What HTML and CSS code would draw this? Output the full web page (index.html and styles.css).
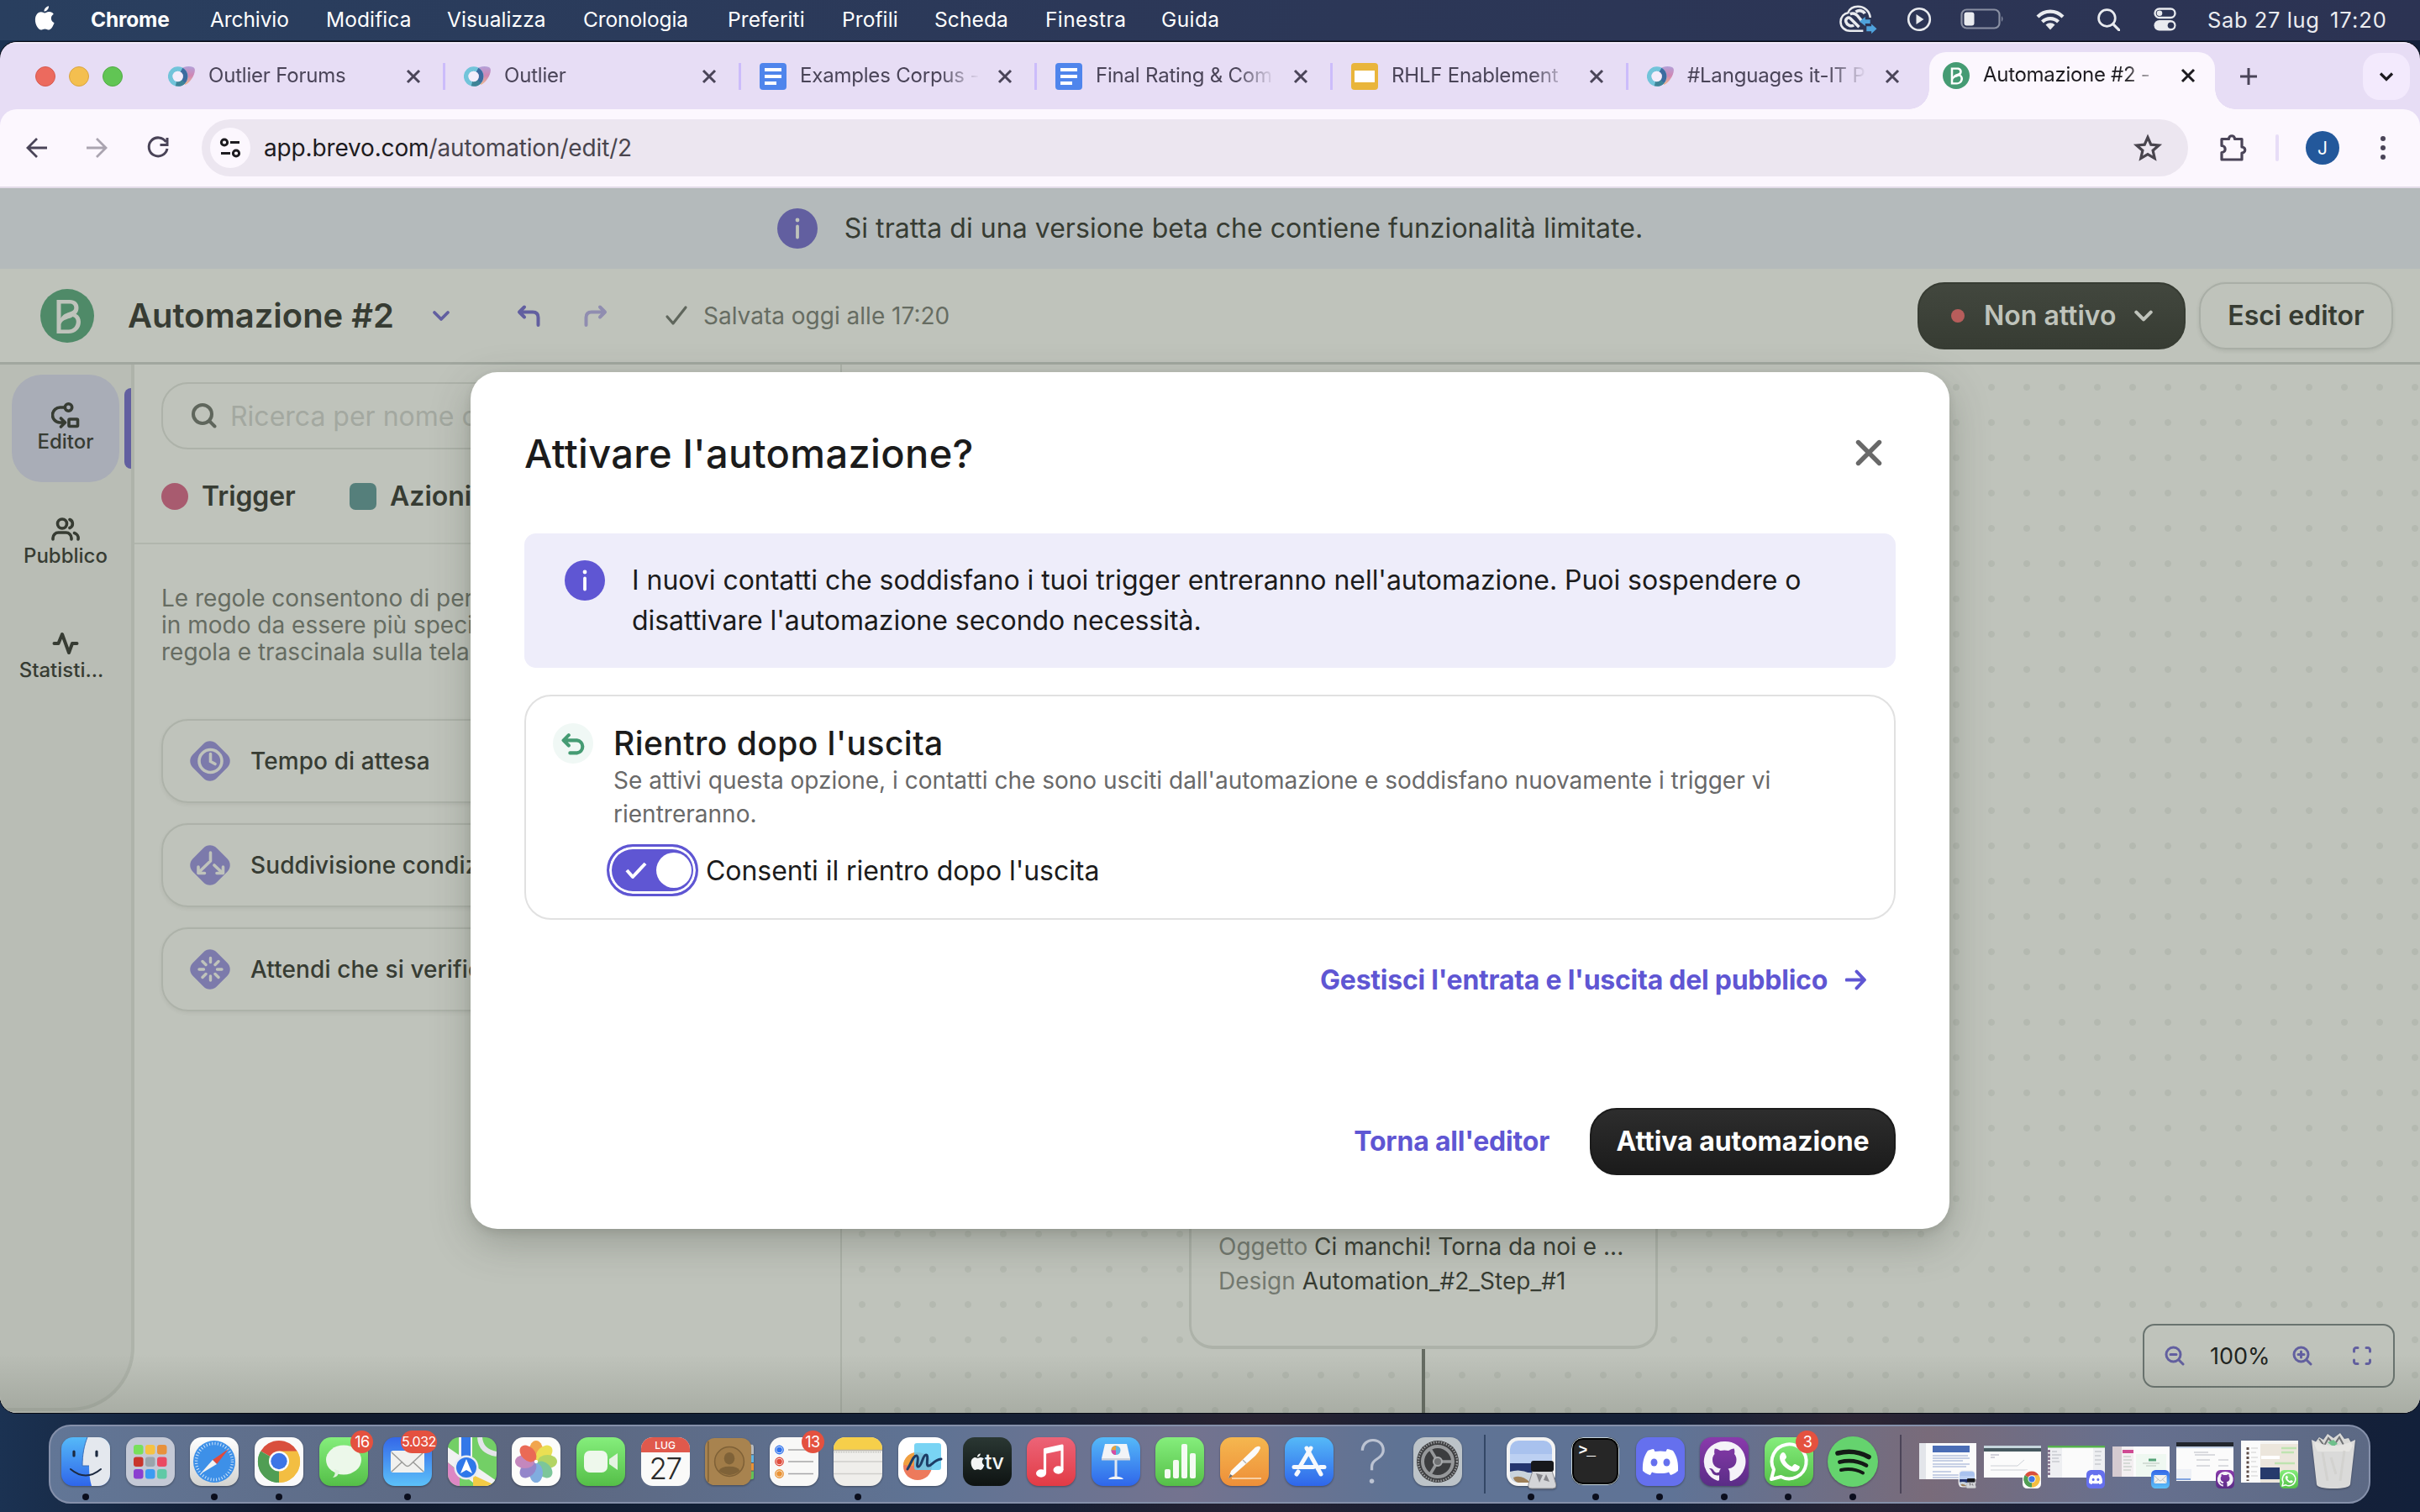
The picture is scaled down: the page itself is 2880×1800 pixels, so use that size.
FILE: index.html
```html
<!DOCTYPE html>
<html lang="it">
<head>
<meta charset="utf-8">
<title>Automazione #2 - Brevo</title>
<link rel="stylesheet" href="styles.css">
</head>
<body>
<svg class="defs" width="0" height="0" aria-hidden="true">
  <defs>
    <linearGradient id="gBlue" x1="0" y1="0" x2="0" y2="1"><stop offset="0" stop-color="#55b9f8"/><stop offset="1" stop-color="#2f66ea"/></linearGradient>
    <linearGradient id="gBlueUp" x1="0" y1="0" x2="0" y2="1"><stop offset="0" stop-color="#3467e8"/><stop offset="1" stop-color="#5cc1f9"/></linearGradient>
    <linearGradient id="gGreen" x1="0" y1="0" x2="0" y2="1"><stop offset="0" stop-color="#85ee7c"/><stop offset="1" stop-color="#55bf48"/></linearGradient>
    <linearGradient id="gGrey" x1="0" y1="0" x2="0" y2="1"><stop offset="0" stop-color="#ffffff"/><stop offset="1" stop-color="#d3d3d0"/></linearGradient>
    <linearGradient id="gRed" x1="0" y1="0" x2="0" y2="1"><stop offset="0" stop-color="#ec6478"/><stop offset="1" stop-color="#e23b45"/></linearGradient>
    <linearGradient id="gOrange" x1="0" y1="0" x2="0" y2="1"><stop offset="0" stop-color="#f5b74f"/><stop offset="1" stop-color="#ee8f39"/></linearGradient>
    <linearGradient id="gPurple" x1="0" y1="0" x2="0" y2="1"><stop offset="0" stop-color="#8a3aac"/><stop offset="1" stop-color="#5a2d86"/></linearGradient>
    <linearGradient id="gOut" x1="0" y1="0" x2="0" y2="1"><stop offset="0" stop-color="#b3a0d8"/><stop offset=".5" stop-color="#cf86b4"/><stop offset="1" stop-color="#eeb98f"/></linearGradient>
  </defs>
  <symbol id="outlier" viewBox="0 0 32 32">
    <path d="M14 8c4-4 11-5 16-3 4 2 1 10-2 14-2 3-5 6-8 7z" fill="url(#gOut)"/>
    <circle cx="11.700" cy="16" r="9" fill="none" stroke="#72c4da" stroke-width="5.600"/>
    <path d="M16 8.200a9 9 0 0 1 0 15.600" fill="none" stroke="#3c6ba0" stroke-width="5.600"/>
    <path d="M18.500 22a9 9 0 0 1-9 2.600" fill="none" stroke="#3f8497" stroke-width="5.600"/>
    <circle cx="11.700" cy="16" r="6.200" fill="#f3edfb"/>
  </symbol>
  <symbol id="gdoc" viewBox="0 0 32 32"><rect width="32" height="32" rx="4" fill="#4f85ec"/><path d="M6 6h20v4H6zM6 14h20v4H6zM6 22h14v4H6z" fill="#fff"/></symbol>
  <symbol id="gslide" viewBox="0 0 32 32"><rect width="32" height="32" rx="4" fill="#e9b53b"/><rect x="4" y="9" width="24" height="14" fill="#fff"/></symbol>
  <symbol id="brevo" viewBox="0 0 64 64"><circle cx="32" cy="32" r="32" fill="currentColor"/><path d="M19.500 13H35c6.500 0 10.500 3.800 10.500 9.300 0 3-1 5.500-3 7.500 3.500 1.700 5.500 5.200 5.500 9.400C48 47 42 53 33.500 53h-14zM24.500 17.500V35c1.500-4 5-5.500 9-7 4-1.300 6.800-2.700 6.800-5.600 0-3-2-4.900-5.500-4.900zM42.800 38.800c0-3-1.800-5-4.300-5.800-3 2.600-12.500 2.800-14 9v6.500h9.300c5.200 0 9-4.300 9-9.700z" fill="var(--letter)" fill-rule="evenodd"/></symbol>
  <symbol id="x" viewBox="0 0 32 32"><path d="M9 9l14 14M23 9L9 23" stroke="currentColor" stroke-width="3" fill="none"/></symbol>
  <symbol id="chev" viewBox="0 0 24 24"><path d="M4 8l8 8 8-8" stroke="currentColor" stroke-width="3.800" stroke-linecap="round" stroke-linejoin="round" fill="none"/></symbol>
  <symbol id="info" viewBox="0 0 48 48"><circle cx="24" cy="24" r="24" fill="currentColor"/><circle cx="24" cy="14" r="2.400" fill="var(--mark)"/><path d="M24 21.500v13" stroke="var(--mark)" stroke-width="3.800" stroke-linecap="round"/></symbol>
  <symbol id="turn" viewBox="0 0 32 32"><path d="M11 5.500L5 11.500l6 6M6 11.500h15c4.500 0 6.500 2.500 6.500 6.500v9" stroke="currentColor" stroke-width="4" stroke-linecap="round" stroke-linejoin="round" fill="none"/></symbol>
  <symbol id="apple" viewBox="0 0 28 34"><path d="M19.500 0c.3 3.600-2.900 7.400-6.300 7.300C12.800 4 16.200.4 19.500 0zM14 9.500c1.400 0 3.400-1.900 6.300-1.600 2.400.1 4.500 1.200 5.800 3.100-5 3.100-4.100 9.900.9 12-1.300 3.600-4 9.300-7.300 9.500-2.100 0-2.900-1.200-5.400-1.200s-3.400 1.200-5.400 1.200C5.400 32.500 1 25.500 1 18.700c0-6.900 4.400-10.600 8-10.600 2.300 0 3.700 1.400 5 1.400z" fill="currentColor"/></symbol>
  <symbol id="i-chrome" viewBox="0 0 58 58"><rect width="58" height="58" rx="14" fill="#fafafa"/><path d="M29 29L7.300 16.500A25 25 0 0 1 50.700 16.500z" fill="#d94f3d"/><path d="M29 29L50.700 16.500A25 25 0 0 1 29 54z" fill="#f3be42"/><path d="M29 29l0 25A25 25 0 0 1 7.300 16.500z" fill="#509e54"/><path d="M29 16.500h21.700A25 25 0 0 1 29 54L40 35z" fill="#f3be42"/><path d="M7.300 16.500L18 35l11 6-2 13A25 25 0 0 1 7.300 16.500z" fill="#509e54"/><circle cx="29" cy="28.500" r="12" fill="#fff"/><circle cx="29" cy="28.500" r="9.700" fill="#3d75e6"/></symbol>
  <symbol id="i-discord" viewBox="0 0 58 58"><rect width="58" height="58" rx="14" fill="#6570ee"/><path d="M21 14c-4 .6-7 2-7 2C9 23 7.500 31 8 40c4 4 9 5 9 5l2-3.500c4 2 16 2 20 0l2 3.500s5-1 9-5c.5-9-1-17-6-24 0 0-3-1.400-7-2l-1.500 3c-4-.8-9-.8-13 0z" fill="#fff"/><ellipse cx="21.500" cy="30" rx="4" ry="4.500" fill="#6570ee"/><ellipse cx="36.500" cy="30" rx="4" ry="4.500" fill="#6570ee"/></symbol>
  <symbol id="i-mail" viewBox="0 0 58 58"><rect width="58" height="58" rx="14" fill="url(#gBlueUp)"/><rect x="9" y="16" width="40" height="26" rx="3" fill="#f1f1ef"/><path d="M10 18l16 15q3 3 6 0l16-15M10 41l13-12M48 41L35 29" stroke="#9b9b99" stroke-width="1.500" fill="none"/></symbol>
  <symbol id="i-github" viewBox="0 0 58 58"><rect width="58" height="58" rx="14" fill="url(#gPurple)"/><path d="M29 5a24 24 0 0 0-8 46.700c1.500.3 2-.6 2-1.500v-5c-6 1-8-2-9-4.500-.7-1.500-1.700-2.500-3-3.500 3-.7 5 1.500 6 3.200 1.700 2.300 4 2 6 1 .3-2 1-3.200 2-4-5.500-1-10-3.300-10-11 0-2.500 1-4.700 2.500-6.400-.5-2-.5-4.300.3-6.500 2.200 0 4.700 1.300 6.700 2.600 3-.8 6.500-.8 9.500 0 2-1.300 4.500-2.600 6.700-2.600.8 2.200.8 4.500.3 6.500 1.500 1.700 2.500 3.900 2.500 6.400 0 7.700-4.500 10-10 11 1.500 1.400 2 3.200 2 6v7c0 .9.500 1.800 2 1.500A24 24 0 0 0 29 5z" fill="#f5f2f8"/></symbol>
  <symbol id="i-whatsapp" viewBox="0 0 58 58"><rect width="58" height="58" rx="14" fill="url(#gGreen)"/><path d="M8 50l3-11.500A20.500 20.500 0 1 1 19.500 47z" fill="none" stroke="#fff" stroke-width="4" stroke-linejoin="round"/><path d="M20 19c2-2 4-1 5 1.500l1 2.500c.5 1.500-1.500 3-2 4 2 4 5 6.500 8.500 8 1-1 2.500-3.500 4-3l5 2.500c1 .8-.5 4-2.500 5.300-3 1.700-7 .7-11-1.500-4.500-2.500-8-6.500-9.500-11-1-3.500-.5-6.300 1.500-8.300z" fill="#fff"/></symbol>
  <symbol id="i-preview" viewBox="0 0 58 62"><rect width="58" height="58" rx="14" fill="#f3f3f3"/><rect x="4" y="4" width="50" height="50" rx="10" fill="#a9c2ee"/><path d="M4 20h50v12H4z" fill="#bcd0f2"/><path d="M4 31h50v11H4z" fill="#24356f"/><path d="M4 41q12-4 24 2t26-2v5a9 9 0 0 1-9 8H14a10 10 0 0 1-10-10z" fill="#c9d3dc"/><path d="M8 48q10-4 20 6H14q-5-1-6-6z" fill="#9d7f58"/><path d="M31 40h23l5 17q0 4-4 4H30q-5 0-4-5z" fill="#d4d5d8" stroke="#8e8e92"/><path d="M35 43l8 2-4 9zM47 44l4 9-7-2z" fill="#85858a"/><rect x="29" y="28" width="27" height="13" rx="3" fill="#17181b"/></symbol>
</svg>

<div class="desktop">
  <header class="menubar">
    <svg class="mb-apple"><use href="#apple"/></svg>
    <nav class="mb-menus">
      <b class="m-app">Chrome</b><span class="m1">Archivio</span><span class="m2">Modifica</span><span class="m3">Visualizza</span><span class="m4">Cronologia</span><span class="m5">Preferiti</span><span class="m6">Profili</span><span class="m7">Scheda</span><span class="m8">Finestra</span><span class="m9">Guida</span>
    </nav>
    <div class="mb-status">
      <svg class="s-cc" viewBox="0 0 46 34"><g fill="none" stroke="#e9ebef" stroke-width="2.600"><path d="M29 31H13C6 31 1.500 26 1.500 20S6 9.500 10.500 9c2-5 7-7.500 12-7.500 8 0 14.500 5.500 15 13.500"/><path d="M24 26.500L13.500 16c-3-2.500-6.500.5-5.500 4s6 6.500 9.500 4M13 10.500c5-2 8 .5 10.500 4L28 20" stroke-width="3.600"/><path d="M20 8c4-3 9-1.500 11 2" stroke-width="4"/></g><path d="M24.500 19.500l7-5.500v3.200h6v5h-6v3zM45.500 28.500l-6.500-6v3h-6v6h6v3z" fill="#4fa3dd"/></svg>
      <svg class="s-play" viewBox="0 0 30 30"><circle cx="15" cy="15" r="12.800" fill="none" stroke="#e9ebef" stroke-width="2.600"/><path d="M11.500 9v12l9-6z" fill="#e9ebef"/></svg>
      <svg class="s-batt" viewBox="0 0 52 26"><rect x="1.500" y="1.500" width="45" height="22" rx="6" fill="none" stroke="#8a90a3" stroke-width="2.200"/><rect x="4.500" y="4.500" width="12" height="16" rx="3" fill="#e9ebef"/><path d="M49 9q3 3.500 0 7z" fill="#8a90a3"/></svg>
      <svg class="s-wifi" viewBox="0 0 34 26"><g fill="none" stroke="#e9ebef" stroke-width="4.200"><path d="M2 9.500a21 21 0 0 1 30 0"/><path d="M7.500 15.500a13.500 13.500 0 0 1 19 0"/></g><path d="M17 25l-5.500-6a8 8 0 0 1 11 0z" fill="#e9ebef"/></svg>
      <svg class="s-find" viewBox="0 0 26 26"><circle cx="11" cy="11" r="9.500" fill="none" stroke="#e9ebef" stroke-width="2.600"/><path d="M18 18l7 7" stroke="#e9ebef" stroke-width="3" stroke-linecap="round"/></svg>
      <svg class="s-ctl" viewBox="0 0 28 28"><rect x="1.500" y="1.500" width="24" height="10.500" rx="5.200" fill="none" stroke="#e9ebef" stroke-width="2.400"/><circle cx="7" cy="6.800" r="3.300" fill="#e9ebef"/><rect x="0.500" y="15" width="26" height="12.500" rx="6.200" fill="#e9ebef"/><circle cx="20.500" cy="21.200" r="3.800" fill="#2c3453"/></svg>
      <span class="s-date">Sab 27 lug</span><span class="s-time">17:20</span>
    </div>
  </header>

  <main class="window">
    <div class="tabstrip">
      <div class="lights"><i class="l-red"></i><i class="l-yel"></i><i class="l-grn"></i></div>
      <div class="tab"><svg class="fav"><use href="#outlier"/></svg><span class="tt">Outlier Forums</span><svg class="tx"><use href="#x"/></svg></div>
      <div class="tab"><svg class="fav"><use href="#outlier"/></svg><span class="tt">Outlier</span><svg class="tx"><use href="#x"/></svg></div>
      <div class="tab"><svg class="fav"><use href="#gdoc"/></svg><span class="tt">Examples Corpus -</span><svg class="tx"><use href="#x"/></svg></div>
      <div class="tab"><svg class="fav"><use href="#gdoc"/></svg><span class="tt">Final Rating &amp; Com</span><svg class="tx"><use href="#x"/></svg></div>
      <div class="tab"><svg class="fav"><use href="#gslide"/></svg><span class="tt">RHLF Enablement</span><svg class="tx"><use href="#x"/></svg></div>
      <div class="tab last"><svg class="fav"><use href="#outlier"/></svg><span class="tt">#Languages it-IT P</span><svg class="tx"><use href="#x"/></svg></div>
      <div class="tab active"><svg class="fav brevo-fav"><use href="#brevo"/></svg><span class="tt">Automazione #2 -</span><svg class="tx"><use href="#x"/></svg></div>
      <svg class="newtab" viewBox="0 0 24 24"><path d="M12 2v20M2 12h20" stroke="#4a4458" stroke-width="3"/></svg>
      <div class="tabsearch"><svg viewBox="0 0 24 24"><path d="M5 8.500l7 7 7-7" stroke="#1d1b20" stroke-width="3.200" fill="none"/></svg></div>
    </div>
    <div class="toolbar">
      <svg class="t-back" viewBox="0 0 32 32"><path d="M16 5L5 16l11 11M5 16h23" stroke="#4a4458" stroke-width="2.800" fill="none"/></svg>
      <svg class="t-fwd" viewBox="0 0 32 32"><path d="M16 5l11 11-11 11M27 16H4" stroke="#aaa4b0" stroke-width="2.800" fill="none"/></svg>
      <svg class="t-rel" viewBox="0 0 32 32"><path d="M25.500 9A11 11 0 1 0 27 17M27 4v8.500h-8.500" stroke="#4a4458" stroke-width="3" fill="none"/></svg>
      <div class="omnibox">
        <span class="site"><svg viewBox="0 0 28 28"><g fill="none" stroke="#1d1b20" stroke-width="3"><circle cx="7" cy="7.500" r="3.600"/><path d="M14 7.500h11M3 20.500h11"/><circle cx="21" cy="20.500" r="3.600"/></g></svg></span>
        <span class="url">app.brevo.com<em>/automation/edit/2</em></span>
        <svg class="star" viewBox="0 0 36 36"><path d="M18 5.500l3.800 8.700 9.400.8-7.100 6.200 2.100 9.300-8.200-4.900-8.200 4.900 2.100-9.300L4.800 15l9.400-.8z" fill="none" stroke="#49454e" stroke-width="3.200"/></svg>
      </div>
      <svg class="t-ext" viewBox="0 0 36 36"><path d="M4 7.500h8.500c0-5 7-5 7 0H28v9.500c5 0 5 7 0 7V32H4v-8.500c5.500 0 5.500-8 0-8z" fill="none" stroke="#4a4458" stroke-width="3.200" stroke-linejoin="round"/></svg>
      <i class="t-sep"></i>
      <span class="avatar">J</span>
      <svg class="t-dots" viewBox="0 0 8 30"><circle cx="4" cy="4" r="3"/><circle cx="4" cy="15" r="3"/><circle cx="4" cy="26" r="3"/></svg>
    </div>

    <section class="page">
      <div class="beta"><svg class="beta-i"><use href="#info"/></svg><span>Si tratta di una versione beta che contiene funzionalità limitate.</span></div>
      <div class="apphead">
        <svg class="logo"><use href="#brevo"/></svg>
        <h1>Automazione #2</h1>
        <svg class="h-chev"><use href="#chev"/></svg>
        <svg class="h-undo"><use href="#turn"/></svg>
        <svg class="h-redo"><use href="#turn"/></svg>
        <svg class="h-check" viewBox="0 0 28 28"><path d="M3 15l7 8L25 4" stroke="#5f665c" stroke-width="3.200" fill="none" stroke-linecap="round" stroke-linejoin="round"/></svg>
        <span class="saved">Salvata oggi alle 17:20</span>
        <button class="status"><i></i><span>Non attivo</span><svg><use href="#chev"/></svg></button>
        <button class="exit">Esci editor</button>
      </div>
      <div class="work">
        <aside class="rail">
          <div class="rail-item on">
            <svg viewBox="0 0 34 32"><g fill="none" stroke="#373c33" stroke-width="3.600" stroke-linejoin="round" stroke-linecap="round"><circle cx="20.500" cy="7" r="4.200"/><path d="M15.500 7H11a9 9 0 0 0-1 18h5.500M11.500 20l5 5-5 5"/><rect x="21" y="21" width="10.500" height="8.500" rx="1"/></g></svg>
            <span>Editor</span>
          </div>
          <div class="rail-item">
            <svg viewBox="0 0 34 30"><g fill="none" stroke="#373c33" stroke-width="3.600" stroke-linecap="round"><circle cx="13" cy="8.500" r="5.500"/><path d="M2 27v-1.500a6.500 6.500 0 0 1 6.500-6.500h9a6.500 6.500 0 0 1 6.500 6.500V27M22 3.500a5.400 5.400 0 0 1 0 10M27.500 19.500a6.500 6.500 0 0 1 4.500 7.500"/></g></svg>
            <span>Pubblico</span>
          </div>
          <div class="rail-item r3">
            <svg viewBox="0 0 34 30"><path d="M3.500 15h5L13 4l8 22 4-11h5.500" fill="none" stroke="#373c33" stroke-width="4" stroke-linecap="round" stroke-linejoin="round"/></svg>
            <span>Statisti...</span>
          </div>
        </aside>
        <div class="panel">
          <div class="search"><svg viewBox="0 0 32 32"><circle cx="14" cy="14" r="11" fill="none" stroke="#5f665c" stroke-width="4"/><path d="M22.500 22.500l6 6" stroke="#5f665c" stroke-width="4" stroke-linecap="round"/></svg><span>Ricerca per nome o</span></div>
          <div class="kinds"><i class="k-dot"></i><b class="k-trig">Trigger</b><i class="k-sq"></i><b>Azioni</b></div>
          <div class="rules">
            <p>Le regole consentono di pers<br>in modo da essere più specif<br>regola e trascinala sulla tela.</p>
            <div class="rule"><svg viewBox="0 0 56 56"><rect x="8" y="8" width="40" height="40" rx="11" transform="rotate(45 28 28)" fill="#7c7aab"/><circle cx="28.500" cy="28" r="13.500" fill="none" stroke="#bfc3bb" stroke-width="3.600"/><path d="M28.500 19.500v9l5.500 3" fill="none" stroke="#bfc3bb" stroke-width="3.600" stroke-linecap="round"/></svg><span>Tempo di attesa</span></div>
            <div class="rule"><svg viewBox="0 0 56 56"><rect x="8" y="8" width="40" height="40" rx="11" transform="rotate(45 28 28)" fill="#7c7aab"/><path d="M28.500 13v10L14 37M14 30v7.500h7.500M33 28l10 9.500M43.500 30v7.500H36" fill="none" stroke="#bfc3bb" stroke-width="3.600" stroke-linecap="round" stroke-linejoin="round"/></svg><span>Suddivisione condizi</span></div>
            <div class="rule"><svg viewBox="0 0 56 56"><rect x="8" y="8" width="40" height="40" rx="11" transform="rotate(45 28 28)" fill="#7c7aab"/><path d="M28.500 14.500v5M28.500 36v5M15 28h5.500M36.500 28H42M19 18.500l4 4M34 33.500l4 4M38 18.500l-4 4M23 33.500l-4 4" fill="none" stroke="#bfc3bb" stroke-width="3.400" stroke-linecap="round"/></svg><span>Attendi che si verifich</span></div>
          </div>
        </div>
        <div class="canvas">
          <div class="node"><p><em>Oggetto</em> Ci manchi! Torna da noi e ...</p><p><em>Design</em> Automation_#2_Step_#1</p></div>
          <i class="wire"></i>
          <div class="zoomer">
            <svg viewBox="0 0 24 24"><g fill="none" stroke="#625fa0" stroke-width="3" stroke-linecap="round"><circle cx="10.500" cy="10.500" r="8.500"/><path d="M17 17l5 5M7 10.500h7"/></g></svg>
            <span>100%</span>
            <svg viewBox="0 0 24 24"><g fill="none" stroke="#625fa0" stroke-width="3" stroke-linecap="round"><circle cx="10.500" cy="10.500" r="8.500"/><path d="M17 17l5 5M7 10.500h7M10.500 7v7"/></g></svg>
            <svg class="full" viewBox="0 0 24 24"><path d="M2.500 7V5a2.500 2.500 0 0 1 2.500-2.500h2M17 2.500h2A2.500 2.500 0 0 1 21.500 5v2M21.500 17v2a2.500 2.500 0 0 1-2.500 2.500h-2M7 21.500H5A2.500 2.500 0 0 1 2.500 19v-2" fill="none" stroke="#625fa0" stroke-width="3" stroke-linecap="round"/></svg>
          </div>
        </div>
      </div>
      <div class="shade"></div>

      <div class="modal">
        <div class="m-head"><h2>Attivare l'automazione?</h2><svg viewBox="0 0 32 32"><path d="M3.500 3.500l25 25M28.500 3.500l-25 25" stroke="#696969" stroke-width="5.400" stroke-linecap="round"/></svg></div>
        <div class="m-info"><svg><use href="#info"/></svg><p>I nuovi contatti che soddisfano i tuoi trigger entreranno nell'automazione. Puoi sospendere o<br>disattivare l'automazione secondo necessità.</p></div>
        <div class="m-card">
          <span class="m-badge"><svg viewBox="0 0 28 26"><path d="M8.500 3L2.500 9l6 6M3.500 9H18a7.300 7.300 0 0 1 0 14.500h-8" fill="none" stroke="#459b73" stroke-width="4" stroke-linecap="round" stroke-linejoin="round"/></svg></span>
          <div class="m-body">
            <h3>Rientro dopo l'uscita</h3>
            <p>Se attivi questa opzione, i contatti che sono usciti dall'automazione e soddisfano nuovamente i trigger vi<br>rientreranno.</p>
            <label class="m-sw"><span class="toggle"><svg viewBox="0 0 28 22"><path d="M3 11l7 8L25 3" fill="none" stroke="#fff" stroke-width="4" stroke-linejoin="round"/></svg><i></i></span><span>Consenti il rientro dopo l'uscita</span></label>
          </div>
        </div>
        <div class="m-link"><span>Gestisci l'entrata e l'uscita del pubblico</span><svg viewBox="0 0 24 24"><path d="M1.500 12h20M13 2.500l9 9.500-9 9.500" fill="none" stroke="#5f56d3" stroke-width="3.800" stroke-linecap="round" stroke-linejoin="round"/></svg></div>
        <div class="m-foot"><span>Torna all'editor</span><button>Attiva automazione</button></div>
      </div>
    </section>
  </main>

  <footer class="dock">
    <div class="slot run"><svg viewBox="0 0 58 58"><rect width="58" height="58" rx="14" fill="url(#gBlue)"/><path d="M31 0h13a14 14 0 0 1 14 14v30a14 14 0 0 1-14 14h-8c-2-7-3-14-3-24h-8c0-13 2-24 6-34z" fill="#e4e8ee"/><path d="M15 17v5M42 17v5" stroke="#1d2a40" stroke-width="3.200" stroke-linecap="round"/><path d="M11 38q18 15 36 0" stroke="#1d2a40" stroke-width="2" fill="none" stroke-linecap="round"/><path d="M31 0c-4 10-6 21-6 34h8" stroke="#3b6fb8" stroke-width="1" fill="none"/></svg></div>
    <div class="slot"><svg viewBox="0 0 58 58"><rect width="58" height="58" rx="14" fill="#c4c9d6"/><g><rect x="9" y="9" width="11.500" height="11.500" rx="3" fill="#78e05b"/><rect x="23" y="9" width="11.500" height="11.500" rx="3" fill="#f5c244"/><rect x="37" y="9" width="11.500" height="11.500" rx="3" fill="#e8913c"/><rect x="9" y="23.500" width="11.500" height="11.500" rx="3" fill="#c8352c"/><rect x="23" y="23.500" width="11.500" height="11.500" rx="3" fill="#9aa4ac"/><rect x="37" y="23.500" width="11.500" height="11.500" rx="3" fill="#ea4a62"/><rect x="9" y="38" width="11.500" height="11.500" rx="3" fill="#8a3fd0"/><rect x="23" y="38" width="11.500" height="11.500" rx="3" fill="#3b9bf3"/><rect x="37" y="38" width="11.500" height="11.500" rx="3" fill="#5fc9a6"/></g></svg></div>
    <div class="slot run"><svg viewBox="0 0 58 58"><rect width="58" height="58" rx="14" fill="url(#gGrey)"/><circle cx="29" cy="29" r="25" fill="#3d90e8"/><circle cx="29" cy="29" r="21.500" fill="none" stroke="#cfe4fa" stroke-width="3.500" stroke-dasharray="1 2.375"/><path d="M46 14L32 32l-5-5z" fill="#e0493c"/><path d="M12 44l15-17 5 5z" fill="#f2f2f2"/></svg></div>
    <div class="slot run"><svg><use href="#i-chrome"/></svg></div>
    <div class="slot"><svg viewBox="0 0 58 58"><rect width="58" height="58" rx="14" fill="url(#gGreen)"/><ellipse cx="29" cy="27" rx="21" ry="17.500" fill="#ecf8ea"/><path d="M16 48q7-1 8-8l-6-2q2 6-2 10z" fill="#e0f2dd"/></svg><b class="badge">16</b></div>
    <div class="slot run"><svg><use href="#i-mail"/></svg><b class="badge wide">5.032</b></div>
    <div class="slot"><svg viewBox="0 0 58 58"><clipPath id="mc"><rect width="58" height="58" rx="14"/></clipPath><g clip-path="url(#mc)"><path d="M0 0h58v58H0z" fill="#73cf66"/><path d="M0 12l58 40v10H40L0 30z" fill="#f1f1f3"/><path d="M0 30l14 12v16H0z" fill="#dd87c4"/><path d="M30 45l28 13H30z" fill="#f3cb45"/><path d="M13 0h16v40H13z" fill="#f1f1f3"/><path d="M16 0h11v40H16z" fill="#3478e8"/><path d="M38 0q1 17 20 20" stroke="#e3e4e8" stroke-width="6" fill="none"/><circle cx="22" cy="36" r="14.500" fill="#e9ecf2"/><circle cx="22" cy="36" r="12" fill="#2f78ea"/><path d="M22 26l7 17-7-4-7 4z" fill="#fff"/></g></svg></div>
    <div class="slot"><svg viewBox="0 0 58 58"><rect width="58" height="58" rx="14" fill="#fcfcfa"/><g opacity=".88"><ellipse cx="29" cy="15.500" rx="8" ry="11.500" fill="#f09a37"/><ellipse cx="29" cy="15.500" rx="8" ry="11.500" fill="#e8dc3c" transform="rotate(45 29 29)"/><ellipse cx="29" cy="15.500" rx="8" ry="11.500" fill="#a9cf4f" transform="rotate(90 29 29)"/><ellipse cx="29" cy="15.500" rx="8" ry="11.500" fill="#6bbf8c" transform="rotate(135 29 29)"/><ellipse cx="29" cy="15.500" rx="8" ry="11.500" fill="#6fa3dc" transform="rotate(180 29 29)"/><ellipse cx="29" cy="15.500" rx="8" ry="11.500" fill="#8676c4" transform="rotate(225 29 29)"/><ellipse cx="29" cy="15.500" rx="8" ry="11.500" fill="#bd78b5" transform="rotate(270 29 29)"/><ellipse cx="29" cy="15.500" rx="8" ry="11.500" fill="#e8573f" transform="rotate(315 29 29)"/></g></svg></div>
    <div class="slot"><svg viewBox="0 0 58 58"><rect width="58" height="58" rx="14" fill="url(#gGreen)"/><rect x="9" y="16" width="28" height="26" rx="7" fill="#eef8ec"/><path d="M39 26l10-7v20l-10-7z" fill="#e4f3e1"/></svg></div>
    <div class="slot"><div class="cal"><b>LUG</b><span>27</span></div></div>
    <div class="slot"><svg viewBox="0 0 60 58"><path d="M52 8h6q2 0 2 4v8h-8z" fill="#b9bcc0"/><path d="M52 21h8v9h-8z" fill="#5fb4e5"/><path d="M52 31h8v9h-8z" fill="#e99237"/><path d="M52 41h8v8q0 2-3 2h-5z" fill="#62c257"/><rect width="57" height="58" rx="12" fill="#a8834f"/><path d="M4 4v50" stroke="#7d5f35" stroke-width="1.500"/><circle cx="30" cy="29" r="18" fill="#a17c48" stroke="#7f6137" stroke-width="1.600"/><ellipse cx="30" cy="25" rx="6.500" ry="7.500" fill="#7f6238"/><path d="M17 40q3-5 13-5t13 5a18 18 0 0 1-26 0z" fill="#7f6238"/></svg></div>
    <div class="slot"><svg viewBox="0 0 58 58"><rect width="58" height="58" rx="14" fill="#f8f8f7"/><path d="M22 15h30M22 29h30M22 43.500h30" stroke="#a6a6a8" stroke-width="1.600"/><g stroke-width="1.400" fill="none"><circle cx="11.500" cy="15" r="4.700" stroke="#2d72ee"/><circle cx="11.500" cy="29" r="4.700" stroke="#e04b3c"/><circle cx="11.500" cy="43.500" r="4.700" stroke="#ea9335"/></g><circle cx="11.500" cy="15" r="3.300" fill="#2d72ee"/><circle cx="11.500" cy="29" r="3.300" fill="#e04b3c"/><circle cx="11.500" cy="43.500" r="3.300" fill="#ea9335"/></svg><b class="badge">13</b></div>
    <div class="slot run"><svg viewBox="0 0 58 58"><rect width="58" height="58" rx="14" fill="#efeeeb"/><path d="M0 15V14A14 14 0 0 1 14 0h30a14 14 0 0 1 14 14v1z" fill="#f6cf4a"/><path d="M0 15.500h58" stroke="#b9b4a8" stroke-width="1.500"/><path d="M1 17.800h56" stroke="#a8a8a4" stroke-width="1" stroke-dasharray="1 1"/><path d="M0 29h58M0 43.500h58" stroke="#cfcecb" stroke-width="1.300"/></svg></div>
    <div class="slot"><svg viewBox="0 0 58 58"><rect width="58" height="58" rx="14" fill="#fff"/><ellipse cx="23" cy="34.500" rx="17" ry="16.500" fill="#ed7a5c"/><path d="M6 33a17 16 0 0 1 14-15l-2 16z" fill="#f0a040"/><rect x="19" y="7" width="32" height="32" rx="3" fill="#62cdf2" opacity=".85"/><path d="M11 38c4-6 7-17 11-16 4 2-2 13 2 13s5-14 9-14-1 13 3 13 6-7 15-8" fill="none" stroke="#1d3d66" stroke-width="3" stroke-linecap="round"/></svg></div>
    <div class="slot"><div class="tv"><svg viewBox="0 0 28 34"><use href="#apple"/></svg><span>tv</span></div></div>
    <div class="slot"><svg viewBox="0 0 58 58"><rect width="58" height="58" rx="14" fill="url(#gRed)"/><path d="M21.500 43V14.500L42 10v29" fill="none" stroke="#fff" stroke-width="3.200" stroke-linejoin="round"/><path d="M21 14l21-4.500v6L21 20z" fill="#fff"/><ellipse cx="17" cy="43" rx="6" ry="4.700" fill="#fff"/><ellipse cx="37.500" cy="39" rx="6" ry="4.700" fill="#fff"/></svg></div>
    <div class="slot"><svg viewBox="0 0 58 58"><rect width="58" height="58" rx="14" fill="url(#gBlue)"/><path d="M16 8h26l4 17H12z" fill="#f2f4f7"/><path d="M12 25h34v2.500H12z" fill="#cfd4dc"/><circle cx="29" cy="15.500" r="5.500" fill="#5fb4e5"/><path d="M29 15.500v-5.500a5.500 5.500 0 0 0-5.500 5.500z" fill="#e8a23b"/><path d="M29 15.500v5.500a5.500 5.500 0 0 1-5.500-5.500z" fill="#d94ca0"/><path d="M29 27v20" stroke="#e3e8f0" stroke-width="3"/><path d="M20 50q1-3 9-3.500 8 .5 9 3.500z" fill="#f0f2f6"/></svg></div>
    <div class="slot"><svg viewBox="0 0 58 58"><rect width="58" height="58" rx="14" fill="url(#gGreen)"/><g fill="#f4fbf3"><rect x="11" y="38" width="7" height="11" rx="2"/><rect x="21" y="27" width="7" height="22" rx="2"/><rect x="31" y="8" width="7" height="41" rx="2"/><rect x="41" y="19" width="7" height="30" rx="2"/></g></svg></div>
    <div class="slot"><svg viewBox="0 0 58 58"><rect width="58" height="58" rx="14" fill="url(#gOrange)"/><path d="M14 49h35" stroke="#fbe3c6" stroke-width="1.600"/><path d="M10 49l3-9L42 12q6-3 6 1-2 5-6 9L17 44z" fill="#fbfbfa"/><path d="M10 49l2-5 3 2z" fill="#6b6b6b"/><path d="M27 27l4 4" stroke="#b5b5b3" stroke-width="1.600"/></svg></div>
    <div class="slot"><svg viewBox="0 0 58 58"><rect width="58" height="58" rx="14" fill="url(#gBlue)"/><g stroke="#f6f9fd" stroke-width="5" stroke-linecap="round"><path d="M31 13L18 35M26 13l17 31M11 35.500h23M42 35.500h5M16 41l-2 3"/></g></svg></div>
    <div class="slot"><span class="quest">?</span></div>
    <div class="slot"><svg viewBox="0 0 58 58"><rect width="58" height="58" rx="14" fill="#bcc3c8"/><circle cx="29" cy="29" r="25" fill="#3c3d3f"/><circle cx="29" cy="29" r="23" fill="none" stroke="#97999b" stroke-width="2.500" stroke-dasharray="1.500 1.600"/><circle cx="29" cy="29" r="18" fill="none" stroke="#96989a" stroke-width="4"/><path d="M29 29h17M29 29L20 14M29 29l-9 15" stroke="#96989a" stroke-width="3.500"/><circle cx="29" cy="29" r="5" fill="#707274" stroke="#a8aaac" stroke-width="2"/></svg></div>
    <i class="dsep"></i>
    <div class="slot run"><svg class="pv"><use href="#i-preview"/></svg></div>
    <div class="slot run"><div class="term">&gt;_</div></div>
    <div class="slot run"><svg><use href="#i-discord"/></svg></div>
    <div class="slot run"><svg><use href="#i-github"/></svg></div>
    <div class="slot run"><svg><use href="#i-whatsapp"/></svg><b class="badge">3</b></div>
    <div class="slot run"><svg class="spot" viewBox="0 0 60 60"><circle cx="30" cy="30" r="30" fill="#65d36e"/><g fill="none" stroke="#141a16" stroke-linecap="round"><path d="M12 20q20-5 37 4.500" stroke-width="5.600"/><path d="M14.500 30.500q17-4 31.500 4" stroke-width="4.800"/><path d="M16 40q14-3 26 3.500" stroke-width="4"/></g></svg></div>
    <i class="dsep d2"></i>
    <div class="slot"><div class="thumb t1"><svg class="art" viewBox="0 0 68 43"><path d="M0 0h8v43H0z" fill="#e3e5ea"/><path d="M16 3h44v8H16z" fill="#4a6db5"/><path d="M16 15h42M16 18h44M16 21h36M16 25h44M16 28h40M16 34h22M16 38h44M16 41h40" stroke="#93a6cf" stroke-width="1.200"/></svg><svg class="app"><use href="#i-preview"/></svg></div></div>
    <div class="slot"><div class="thumb t2"><svg class="art" viewBox="0 0 68 38"><path d="M0 0h68v3H0z" fill="#c5d5dc"/><path d="M0 3h68v4H0z" fill="#46585f"/><path d="M8 11h10M8 14h5" stroke="#aab" stroke-width="1"/><path d="M8 24h32l8-7M8 29h44" fill="none" stroke="#c3c7ce" stroke-width=".8"/></svg><svg class="app"><use href="#i-chrome"/></svg></div></div>
    <div class="slot"><div class="thumb t3"><svg class="art" viewBox="0 0 68 38"><path d="M0 0h17v38H0zM54 3h14v35H54z" fill="#eeeff2"/><path d="M0 0h68v2.500H0z" fill="#55b04d"/><path d="M1.500 5v31" stroke="#77607f" stroke-width="2.400" stroke-dasharray="3 1.500"/><path d="M5 7h6M5 11h11M5 15h8M5 19h9M56 7h8M56 12h7M56 17h8M56 22h7" stroke="#b6b9c0" stroke-width="1"/></svg><svg class="app"><use href="#i-discord"/></svg></div></div>
    <div class="slot"><div class="thumb t4"><svg class="art" viewBox="0 0 68 36"><path d="M0 0h11v36H0z" fill="#d5cad0"/><path d="M11 0h14v36H11z" fill="#f3eff1"/><path d="M28 9h36v27H28z" fill="#eff8f1"/><path d="M12 4h13v4H12z" fill="#cf4a93"/><path d="M13 12h9M13 16h10M13 20h8M13 24h10M13 28h9M36 20h20M40 23h12" stroke="#b9c4bc" stroke-width="1"/><path d="M43 16h9" stroke="#56a378" stroke-width="3"/></svg><svg class="app"><use href="#i-mail"/></svg></div></div>
    <div class="slot"><div class="thumb t5"><svg class="art" viewBox="0 0 68 46"><path d="M0 0h68v5H0z" fill="#22262d"/><path d="M0 5h68v2H0z" fill="#c5d2e6"/><path d="M21 12h17M22 15h24M24 21h16M24 28h16M50 21h12M50 28h12" stroke="#b9bcc3" stroke-width="1.200"/><path d="M0 32h18v13H0z" fill="#eef1f6"/><path d="M0 44h17" stroke="#5d8ad8" stroke-width="1.500"/></svg><svg class="app"><use href="#i-github"/></svg></div></div>
    <div class="slot"><div class="thumb t6"><svg class="art" viewBox="0 0 68 50"><path d="M23 0h45v50H23z" fill="#ece6dc"/><path d="M23 0h45v4H23z" fill="#f5f5f3"/><path d="M8 8v40" stroke="#5d4d48" stroke-width="3" stroke-dasharray="3 2.500"/><path d="M12 9h8M12 14h6M12 20h8M12 25h6M12 31h8M12 37h7M12 42h8" stroke="#cfcfcf" stroke-width="1"/><path d="M48 9h18M48 14h15M40 27h24" stroke="#bfe3b0" stroke-width="2.500"/><path d="M24 20h22" stroke="#fff" stroke-width="4"/><path d="M23 32h23v14H23z" fill="#263a6c"/></svg><svg class="app"><use href="#i-whatsapp"/></svg></div></div>
    <div class="slot"><svg class="trash" viewBox="0 0 54 68"><path d="M4 14l6-8 5 3 5-7 7 5 8-6 5 7 5-1 5 9-4 7H8z" fill="#d9d9d7"/><path d="M10 8l6 8 5-9 7 8 6-9 5 9" stroke="#6f7174" stroke-width="2" fill="none"/><path d="M20 12l7-3 5 5-6 3z" fill="#6fc08c"/><path d="M1 9q26 14 52 0l-6 53q-1 5-20 5T7 62z" fill="#e6e5e3" opacity=".93"/><path d="M14 24l6 34M40 22l-5 36M24 30l6 20" stroke="#cfcecb" stroke-width="3" opacity=".7"/></svg></div>
  </footer>
</div>
</body>
</html>
```
FILE: styles.css
```css
* { box-sizing: border-box; }
body, h1, h2, h3, p { margin: 0; }
body { font-family: Inter, "Liberation Sans", sans-serif; color: #1b1b1b; overflow: hidden; }
svg { display: block; flex: none; }
i { display: block; flex: none; }
em { font-style: normal; }
button { font: inherit; cursor: pointer; }
.defs { position: absolute; }

.desktop {
  width: 2880px; height: 1800px; display: flex; flex-direction: column;
  background:
    radial-gradient(circle at 2200px 1720px, rgba(110, 50, 40, .3), transparent 220px),
    radial-gradient(circle at 1500px 1700px, rgba(70, 40, 45, .35), transparent 260px),
    linear-gradient(90deg, #1b3252 0, #10182b 12%, #122036 30%, #191f33 50%, #132038 75%, #1d2136 85%, #12203a 100%);
}

/* macOS menu bar */
.menubar {
  height: 48px; flex: none; display: flex; align-items: center; justify-content: space-between;
  padding: 0 37px 2px 41px; color: #fff; font-size: 24.500px; white-space: nowrap;
  background: linear-gradient(90deg, #293f5f, #2c3858 45%, #2c3353);
}
.mb-apple { width: 26px; height: 32px; }
.mb-apple use { transform: scale(.94); }
.mb-menus { flex: 1; display: flex; margin-left: 41px; letter-spacing: .1px; }
.mb-menus > * { flex: none; }
.m-app { width: 142px; letter-spacing: -.2px; }
.m1 { width: 138px; letter-spacing: -.1px; } .m2 { width: 144px; } .m3 { width: 162px; } .m4 { width: 172px; letter-spacing: -.1px; }
.m5 { width: 136px; } .m6 { width: 110px; } .m7 { width: 132px; } .m8 { width: 138px; letter-spacing: .4px; } .m9 { width: 80px; letter-spacing: .4px; }
.mb-status { display: flex; align-items: center; color: #ebecf0; }
.s-cc { width: 45px; height: 34px; margin-right: 35px; }
.s-play { width: 30px; height: 30px; margin-right: 34px; }
.s-batt { width: 52px; height: 26px; margin-right: 38px; }
.s-wifi { width: 34px; height: 27px; margin-right: 39px; }
.s-find { width: 27px; height: 27px; margin-right: 40px; }
.s-ctl { width: 28px; height: 28px; margin-right: 36px; }
.s-date { width: 146px; font-size: 25.500px; letter-spacing: .6px; }
.s-time { width: 70px; font-size: 25.500px; letter-spacing: 1px; }

/* browser window */
.window {
  height: 1632px; flex: none; margin-top: 2px; display: flex; flex-direction: column;
  border-radius: 20px; overflow: hidden; background: #e7ddf5; box-shadow: 0 0 0 1px #060a14;
}
.tabstrip { height: 80px; flex: none; display: flex; align-items: center; border-top: 2px solid #f1ebf9; color: #4a4458; }
.lights { width: 178px; flex: none; display: flex; gap: 16px; padding-left: 42px; }
.lights i { width: 24px; height: 24px; border-radius: 50%; }
.l-red { background: #ec6a5e; border: 1px solid #d65a4f; }
.l-yel { background: #f4bf4f; border: 1px solid #d9a540; }
.l-grn { background: #61c554; border: 1px solid #52ab46; }
.tab {
  width: 352px; height: 32px; flex: none; display: flex; align-items: center;
  padding-left: 22px; border-right: 3px solid #ccbcfb; font-size: 24px;
}
.tab.last { border-color: transparent; width: 358px; }
.fav { width: 32px; height: 32px; margin-right: 16px; }
.tt {
  width: 214px; overflow: hidden; white-space: nowrap; letter-spacing: -.2px; margin-right: 14px; line-height: 30px; height: 32px;
  -webkit-mask-image: linear-gradient(90deg, #000 78%, transparent 100%); mask-image: linear-gradient(90deg, #000 78%, transparent 100%);
}
.tx { width: 32px; height: 32px; }
.tab.active {
  position: relative; align-self: flex-end; width: 340px; height: 68px; padding: 0 0 12px 16px; border: 0;
  background: #fcf7fe; border-radius: 20px 20px 0 0; color: #1d1b20;
}
.tab.active::before, .tab.active::after { content: ""; position: absolute; bottom: 0; width: 24px; height: 24px; }
.tab.active::before { left: -24px; background: radial-gradient(circle at 0 0, transparent 23.500px, #fcf7fe 24px); }
.tab.active::after { right: -24px; background: radial-gradient(circle at 100% 0, transparent 23.500px, #fcf7fe 24px); }
.tab.active .tt { color: #1d1b20; letter-spacing: -.3px; }
.brevo-fav { color: #459b73; --letter: #fff; }
.newtab { width: 24px; height: 24px; margin-left: 28px; }
.tabsearch { width: 56px; height: 56px; margin: 0 12px 0 auto; border-radius: 20px; background: #f3eafd; display: grid; place-items: center; }
.tabsearch svg { width: 24px; height: 24px; }

.toolbar {
  height: 94px; flex: none; display: flex; align-items: center; padding: 0 0 0 28px;
  background: #fcf7fe; border-bottom: 2px solid #e3dce9; border-radius: 20px 20px 0 0;
}
.t-back, .t-fwd, .t-rel { width: 32px; height: 32px; }
.t-fwd { margin-left: 39px; }
.t-rel { margin-left: 41px; }
.omnibox { width: 2364px; height: 68px; margin-left: 36px; display: flex; align-items: center; border-radius: 34px; padding: 0 30px 0 10px; background: #ece6f0; }
.site { width: 48px; height: 48px; border-radius: 50%; background: #fcf7fe; display: grid; place-items: center; }
.site svg { width: 28px; height: 28px; }
.url { flex: 1; margin-left: 16px; font-size: 28px; color: #1d1b20; letter-spacing: -.15px; }
.url em { color: #49454e; }
.star { width: 36px; height: 36px; }
.t-ext { width: 36px; height: 36px; margin-left: 36px; }
.t-sep { width: 4px; height: 32px; background: #e7ddf7; border-radius: 2px; margin-left: 32px; }
.avatar { width: 40px; height: 40px; border-radius: 50%; background: #23589b; color: #fff; font-size: 21px; display: grid; place-items: center; margin-left: 32px; }
.t-dots { width: 8px; height: 30px; margin-left: 48px; fill: #4a4458; }

/* page beneath the dialog */
.page { position: relative; flex: 1; display: flex; flex-direction: column; background: #bfc3bb; color: #373c33; }
.beta { height: 96px; flex: none; display: flex; align-items: center; justify-content: center; gap: 32px; background: #b4babb; font-size: 32px; letter-spacing: .05px; }
.beta span { padding-bottom: 1px; }
.beta-i { width: 48px; height: 48px; color: #625fa0; --mark: #bfc3bb; }
.apphead { height: 114px; flex: none; display: flex; align-items: center; padding: 0 32px 0 48px; border-bottom: 3px solid #a1a79f; white-space: nowrap; }
.logo { width: 64px; height: 64px; color: #4f8a68; --letter: #bfc3bb; }
h1 { font-size: 40px; font-weight: 600; width: 317px; margin-left: 40px; }
.h-chev { width: 24px; height: 24px; margin-left: 44px; color: #625fa0; }
.h-undo, .h-redo { width: 32px; height: 32px; }
.h-undo { margin-left: 76px; color: #625fa0; }
.h-redo { margin-left: 48px; color: #908db0; transform: scaleX(-1); }
.h-check { width: 28px; height: 28px; margin-left: 66px; }
.saved { margin-left: 18px; font-size: 28px; color: #666c62; }
.status {
  width: 319px; height: 80px; margin-left: auto; display: flex; align-items: center; padding: 0 32px 0 38px;
  border: 2px solid #373c33; border-radius: 32px; background: linear-gradient(#42473e, #373c33); color: #bfc3bb; font-size: 32px; font-weight: 600;
}
.status i { width: 16px; height: 16px; border-radius: 50%; background: #b75d5b; }
.status span { margin: 0 20px 0 23px; }
.status svg { width: 26px; height: 26px; }
.exit {
  width: 231px; height: 80px; margin-left: 16px; padding: 0; border: 2px solid #a9aea6; border-radius: 32px; background: none;
  color: #373c33; font-size: 32px; font-weight: 600; box-shadow: 0 2px 4px rgba(60, 66, 56, .12);
}

.work { flex: 1; display: flex; min-height: 0; }
.rail {
  width: 160px; height: 1246px; flex: none; padding: 12px 0 0 14px; background: #b9bdb5;
  border-right: 4px solid #aeb3aa; border-bottom: 4px solid #aeb3aa; border-bottom-right-radius: 76px;
}
.rail-item {
  position: relative; width: 128px; height: 128px; margin-bottom: 8px; border-radius: 36px; padding-top: 32px;
  display: flex; flex-direction: column; align-items: center; font-size: 24px; font-weight: 500; line-height: 32px;
}
.rail-item svg { width: 34px; height: 32px; }
.rail-item.on { background: #a9adb7; }
.rail-item.on::after { content: ""; position: absolute; left: 134px; top: 16px; width: 8px; height: 96px; background: #625fa0; border-radius: 8px 0 0 8px; }
.rail-item.r3 { width: 118px; }
.rail-item.r3 svg { margin-left: 10px; }

.panel { width: 842px; flex: none; border-right: 2px solid #adb2a9; padding-top: 21px; }
.search {
  height: 80px; margin: 0 32px; border: 2px solid #adb2a9; border-radius: 32px; display: flex; align-items: center;
  padding-left: 33px; gap: 15px; font-size: 32px; color: #a3a8a0; white-space: nowrap;
}
.search svg { width: 32px; height: 32px; }
.kinds { display: flex; align-items: center; height: 113px; padding-left: 32px; font-size: 32px; font-weight: 600; border-bottom: 2px solid #b1b6ad; }
.kinds b { font-weight: 600; }
.k-dot { width: 32px; height: 32px; border-radius: 50%; background: #a85b6f; }
.k-trig { width: 176px; margin-left: 16px; letter-spacing: -.1px; }
.k-sq { width: 32px; height: 32px; border-radius: 7px; background: #557f7b; margin-right: 16px; }
.rules { padding: 48px 32px 0; display: flex; flex-direction: column; gap: 24px; }
.rules p { font-size: 28px; line-height: 32px; color: #666c62; white-space: nowrap; margin-bottom: 40px; }
.rule {
  height: 100px; border: 2px solid #adb2a9; border-radius: 32px; display: flex; align-items: center; padding: 0 0 1px 28px; gap: 20px;
  font-size: 28px; font-weight: 500; letter-spacing: .1px; box-shadow: 0 2px 4px rgba(60, 66, 56, .08); white-space: nowrap;
}
.rule svg { width: 56px; height: 56px; }

.canvas {
  position: relative; flex: 1;
  background: radial-gradient(circle, #b4b9b0 3.500px, transparent 4.500px) 3px 6px / 42px 42px;
}
.node {
  position: absolute; left: 413px; top: 571px; width: 558px; height: 601px; padding: 456px 0 0 32px;
  border: 3px solid #adb2a9; border-bottom-width: 4px; border-radius: 28px; background: #bfc3bb; font-size: 28px; line-height: 41px; white-space: nowrap;
}
.node em { color: #737970; }
.wire { position: absolute; left: 690px; top: 1172px; width: 4px; height: 80px; background: #656b62; }
.zoomer {
  position: absolute; right: 30px; top: 1142px; width: 300px; height: 76px; border: 2px solid #69736f; border-radius: 14px; background: #bfc3bb;
  display: flex; align-items: center; padding-left: 24px; font-size: 27px; color: #20231e;
}
.zoomer svg { width: 24px; height: 24px; }
.zoomer span { width: 70px; margin: 0 28px 0 30px; }
.zoomer .full { margin-left: 47px; }
.shade { position: absolute; left: 0; right: 0; bottom: 0; height: 70px; background: linear-gradient(transparent, rgba(90, 97, 85, .22)); }

/* confirmation dialog */
.modal {
  position: absolute; left: 560px; top: 219px; width: 1760px; height: 1020px; padding: 0 64px; border-radius: 32px; background: #fff; color: #1b1b1b;
  display: flex; flex-direction: column; box-shadow: 0 16px 48px rgba(55, 60, 51, .28), 0 4px 10px rgba(55, 60, 51, .12);
}
.m-head { height: 192px; flex: none; display: flex; align-items: center; justify-content: space-between; padding-right: 16px; }
.m-head h2 { font-size: 47px; font-weight: 500; letter-spacing: .35px; white-space: nowrap; }
.m-head svg { width: 32px; height: 32px; }
.m-info { height: 160px; flex: none; display: flex; padding: 32px 48px; gap: 32px; background: #eeedfa; border-radius: 14px; font-size: 32px; line-height: 48px; letter-spacing: -.04px; white-space: nowrap; }
.m-info svg { width: 48px; height: 48px; color: #5f56d3; --mark: #fff; }
.m-card { height: 268px; flex: none; margin-top: 32px; border: 2px solid #e1e1e1; border-radius: 32px; padding: 32px; display: flex; gap: 24px; white-space: nowrap; }
.m-badge { width: 48px; height: 48px; flex: none; border-radius: 50%; background: #f0f8f5; display: grid; place-items: center; }
.m-badge svg { width: 29px; height: 27px; }
.m-body h3 { font-size: 39px; font-weight: 500; line-height: 48px; letter-spacing: .45px; }
.m-body p { font-size: 28px; line-height: 40px; color: #696969; letter-spacing: .01px; }
.m-sw { display: flex; align-items: center; margin: 16px 0 0 -8px; font-size: 32px; gap: 9px; letter-spacing: -.05px; }
.toggle {
  width: 109px; height: 62px; flex: none; padding: 0 5px 0 18px; display: flex; align-items: center; justify-content: space-between;
  border-radius: 31px; border: 3px solid #5f56d3; background: #5f56d3; box-shadow: inset 0 0 0 3px #fff;
}
.toggle svg { width: 28px; height: 22px; }
.toggle i { width: 42px; height: 42px; border-radius: 50%; background: #fff; }
.m-link { margin: 47px 35px 0; height: 48px; display: flex; align-items: center; justify-content: flex-end; gap: 21px; font-size: 32px; font-weight: 650; letter-spacing: -.25px; color: #5f56d3; white-space: nowrap; }
.m-link svg { width: 25px; height: 25px; }
.m-foot { margin-top: 129px; display: flex; align-items: center; justify-content: flex-end; gap: 48px; font-size: 32px; font-weight: 650; letter-spacing: -.2px; color: #5f56d3; white-space: nowrap; }
.m-foot > span { padding-bottom: 1px; }
.m-foot button { width: 364px; height: 80px; padding: 0 0 1px; border: 2px solid #1b1b1b; border-radius: 32px; background: linear-gradient(#2d2d2d, #1b1b1b); color: #fff; letter-spacing: -.05px; }

/* dock */
.dock {
  width: 2763px; height: 94px; flex: none; margin: 14px 0 0 58px; padding-left: 4px; display: flex; border-radius: 26px;
  border: 2px solid #8590aa;
  background: linear-gradient(90deg, #627696 0, #5c6780 20%, #5f7394 38%, #74738f 49%, #5f7394 58%, #5f7396 70%, #796b7a 81%, #66708f 90%, #5c6984 100%);
}
.slot { position: relative; width: 76.600px; flex: none; display: flex; flex-direction: column; align-items: center; padding-top: 13px; }
.slot > svg { width: 58px; height: 58px; filter: drop-shadow(0 1px 1px rgba(0, 0, 0, .35)); }
.slot.run::after { content: ""; position: absolute; left: 34px; top: 80px; width: 8px; height: 8px; border-radius: 50%; background: #0b0e1d; }
.slot > svg.pv { height: 62px; width: 60px; }
.slot > svg.spot { width: 60px; height: 60px; margin-top: -1px; }
.slot > svg.trash { width: 54px; height: 68px; margin-top: -6px; }
.badge {
  position: absolute; top: 5px; left: 47px; min-width: 27px; height: 27px; padding: 0 4px; border-radius: 14px; background: #e4513f;
  color: #fff; font-size: 18px; font-weight: 400; line-height: 27px; text-align: center; letter-spacing: -.5px;
}
.badge.wide { left: 30px; width: 43px; padding: 0; font-size: 16px; }
.cal { width: 58px; height: 58px; border-radius: 14px; overflow: hidden; background: #fafaf9; display: flex; flex-direction: column; align-items: center; color: #2b2b2b; }
.cal b { width: 58px; height: 18px; background: #e0594c; color: #fff; font-size: 12px; line-height: 19px; text-align: center; font-weight: 500; }
.cal span { font-size: 35px; line-height: 38px; font-weight: 300; letter-spacing: -1.500px; }
.tv { width: 58px; height: 58px; border-radius: 14px; background: linear-gradient(#2a3733, #0e1312); display: flex; align-items: center; justify-content: center; color: #f3f4f4; font-size: 25px; font-weight: 500; letter-spacing: -.5px; }
.tv svg { width: 17px; height: 21px; }
.quest { font-size: 72px; line-height: 58px; font-weight: 200; color: #bcc3d2; }
.dsep { width: 2px; height: 70px; background: #334766; margin: 10px 16px 0 17px; }
.d2 { background: #4b4458; margin: 10px 17px 0; }
.term { width: 57px; height: 57px; border-radius: 14px; background: #262626; border: 3.500px solid #000; outline: 1.500px solid #c5d3d8; outline-offset: -1px; color: #fff; font: 700 18px/18px "Liberation Mono", monospace; padding: 4px 0 0 5px; letter-spacing: -1px; }
.thumb { width: 68px; height: 38px; margin-top: 10px; background: #fbfbfb; }
.thumb .art { width: 68px; height: 100%; }
.thumb .app { position: absolute; right: 4px; top: 52px; width: 22px; height: 22px; }
.t1 { height: 43px; margin-top: 7px; }
.t4 { height: 36px; margin-top: 11px; }
.t5 { height: 46px; margin-top: 6px; }
.t6 { height: 50px; margin-top: 4px; }
```
